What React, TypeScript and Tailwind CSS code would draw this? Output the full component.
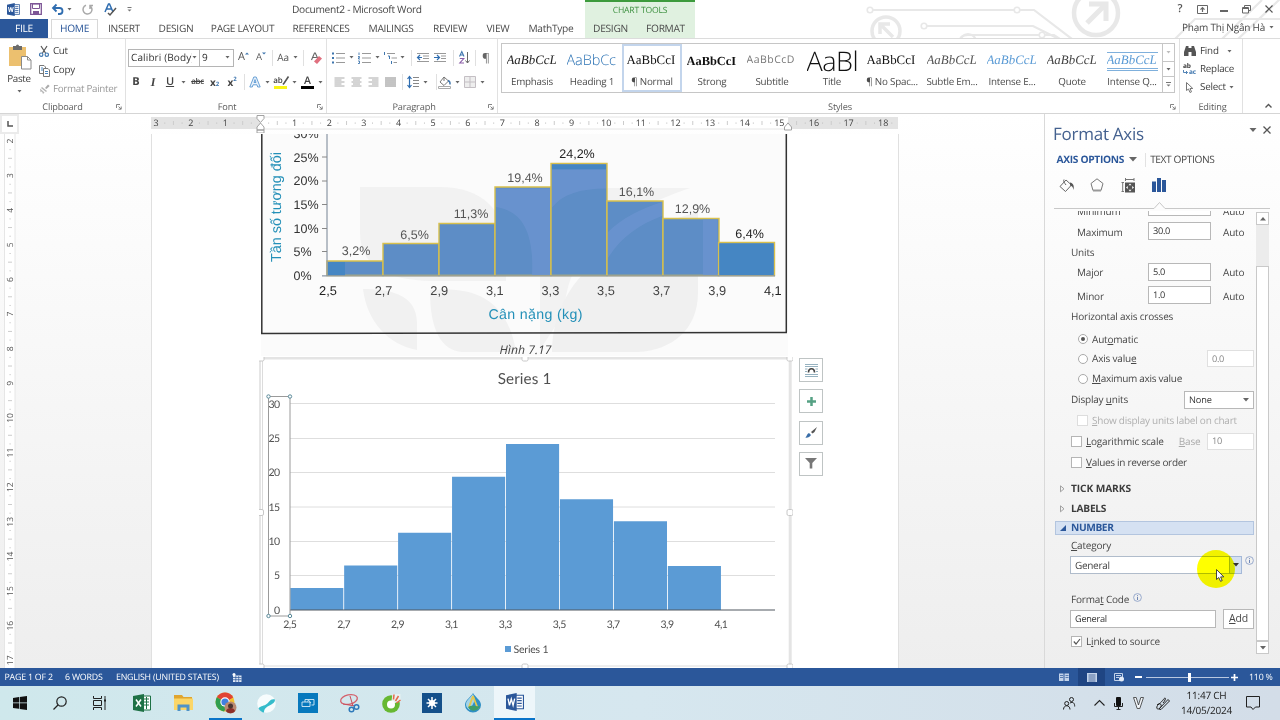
import type { ReactNode } from 'react';
import clsx from 'clsx';

type BoxProps = { className?: string; children?: ReactNode };

const Slot = ({ className, children }: BoxProps) => (
  <div className={clsx('flex shrink-0 items-center justify-center', className)}>{children}</div>
);

const Icon = ({ w, h, children }: { w: number; h: number; children: ReactNode }) => (
  <svg width={w} height={h} viewBox={`0 0 ${w} ${h}`} fill="none" className="shrink-0 overflow-visible">
    {children}
  </svg>
);

const Caret = ({ color = '#666' }: { color?: string }) => (
  <Icon w={5} h={3}>
    <path d="M0.5 0h4L2.5 2.4z" fill={color} />
  </Icon>
);

const Sep = () => <div className="h-4 w-px bg-[#e0e0e0]" />;

const Launcher = () => (
  <Icon w={6} h={6}>
    <path d="M0.5 4V0.5H4M2.5 2.5L5 5M5.2 2.5v2.7H2.5" stroke="#777" strokeWidth="0.9" />
  </Icon>
);

/* ---------- Title bar ---------- */

const WordLogo = ({ size = 13 }: { size?: number }) => (
  <svg width={size} height={size} viewBox="0 0 16 16" className="shrink-0">
    <path d="M8 2h7.5v12H8z" fill="#fff" stroke="#2b579a" strokeWidth="1" />
    <path d="M10 4.5h4M10 6.8h4M10 9.2h4M10 11.5h4" stroke="#2b579a" />
    <path d="M0 2l9.5-2v16L0 14z" fill="#2b579a" />
    <path d="M1.8 5l1.3 6 1.6-5.6L6.300 11l1.400-6" stroke="#fff" strokeWidth="1.2" fill="none" />
  </svg>
);

const Circuit = () => (
  <svg className="absolute right-0 top-0" width="420" height="39" viewBox="860 0 420 39" fill="none" stroke="#e8e8e8" strokeWidth="2.2">
    <circle cx="870" cy="10" r="2.8" strokeWidth="1.6" />
    <path d="M873 10h141M1020 10h14l38 29" />
    <circle cx="1017" cy="10" r="2.8" strokeWidth="1.6" />
    <circle cx="886" cy="31" r="14" strokeWidth="3.500" />
    <path d="M893 37l-11-11M880 34V24h10" strokeWidth="3.500" />
    <circle cx="924" cy="26" r="2.8" strokeWidth="1.6" />
    <path d="M927 26h106l26 13" />
    <path d="M960 39q2-4 8-4h72M1044 35h10l6 4" />
    <circle cx="968" cy="42" r="8" />
    <circle cx="1042" cy="35" r="2.800" strokeWidth="1.6" />
    <circle cx="1096" cy="13" r="22" strokeWidth="4.500" />
    <path d="M1087 23l19-19M1089 4h17v17" strokeWidth="5" />
    <path d="M1175 39l20-20h85M1222 39l40-39M1238 39l42-40" />
  </svg>
);

const Tab = ({ className, children }: BoxProps) => (
  <div className={clsx('flex h-[19px] items-center justify-center whitespace-nowrap text-[10.2px] tracking-[-0.3px] text-[#4a4a4a]', className)}>
    {children}
  </div>
);

const TitleBar = () => (
  <header className="relative flex h-[39px] shrink-0 overflow-hidden border-b border-[#dcdcdc] bg-white">
    <Circuit />
    <div className="flex w-[585px] shrink-0 flex-col">
      <div className="flex h-[19px] items-center">
        <Slot className="w-[26px]"><WordLogo /></Slot>
        <Slot className="w-[19px]">
          <Icon w={12} h={12}>
            <path d="M0.700 0.700h10.600v10.600H0.700z" stroke="#7d5596" strokeWidth="1.300" />
            <path d="M2.500 1h7v4.500h-7z" stroke="#7d5596" />
            <path d="M3 8h6v3.300H3z" fill="#7d5596" />
          </Icon>
        </Slot>
        <Slot className="w-[26px]">
          <Icon w={12} h={11}>
            <path d="M4.500 0.500L1 4l3.500 3.500M1 4h6.500a3 3 0 010 6H6" stroke="#2f6db0" strokeWidth="1.800" />
          </Icon>
        </Slot>
        <Slot className="-ml-1 w-[4px]"><Caret /></Slot>
        <Slot className="ml-[7px] w-[18px]">
          <Icon w={11} h={11}>
            <path d="M4 1.300A4.500 4.500 0 108 1.800M8 5V1.500h3" stroke="#a9a9a9" strokeWidth="1.500" />
          </Icon>
        </Slot>
        <Slot className="ml-[4px] w-[20px]">
          <Icon w={13} h={13}>
            <path d="M1 9L4.500 1h1L9 9M2.500 6h5" stroke="#2f6db0" strokeWidth="1.500" />
            <path d="M4 10l2 2 6-7" stroke="#555" strokeWidth="1.500" />
          </Icon>
        </Slot>
        <Slot className="ml-[6px] w-[6px]">
          <Icon w={5} h={5}>
            <path d="M0.500 0.500h4" stroke="#777" />
            <path d="M0.500 2.500h4l-2 2z" fill="#777" />
          </Icon>
        </Slot>
        <div className="ml-[160px] whitespace-nowrap pt-[2px] text-[10.2px] tracking-[-0.3px] text-[#484848]">Document2 - Microsoft Word</div>
      </div>
      <nav className="flex items-end pt-px">
        <Tab className="w-[48px] bg-[#2b579a] !text-white">FILE</Tab>
        <Tab className="ml-[3px] w-[47px] border border-b-0 border-[#d8d8d8] bg-white !text-[#2b579a]">HOME</Tab>
        <Tab className="w-[52px]">INSERT</Tab>
        <Tab className="w-[52px]">DESIGN</Tab>
        <Tab className="w-[81px]">PAGE LAYOUT</Tab>
        <Tab className="w-[76px]">REFERENCES</Tab>
        <Tab className="w-[64px]">MAILINGS</Tab>
        <Tab className="w-[54px]">REVIEW</Tab>
        <Tab className="w-[42px]">VIEW</Tab>
        <Tab className="w-[64px]">MathType</Tab>
      </nav>
    </div>
    <div className="flex w-[110px] shrink-0 flex-col border-t-2 border-[#3d9b3d] bg-[#e0f1e0]">
      <div className="flex h-[18px] items-center justify-center text-[8.600px] tracking-[-0.2px] text-[#3d9140]">CHART TOOLS</div>
      <div className="flex">
        <Tab className="w-[51px]">DESIGN</Tab>
        <Tab className="w-[59px]">FORMAT</Tab>
      </div>
    </div>
    <div className="relative ml-auto flex flex-col items-end">
      <div className="flex h-[18px] items-center text-[#555]">
        <Slot className="w-[20px] text-[11px] font-semibold">?</Slot>
        <Slot className="w-[24px]">
          <Icon w={11} h={9}>
            <path d="M0.500 0.500h10v8h-10z" stroke="#666" />
            <path d="M5.500 7V3M3.500 4.700l2-2 2 2" stroke="#666" strokeWidth="1.200" />
          </Icon>
        </Slot>
        <Slot className="w-[20px] pt-[4px]"><div className="h-[1.5px] w-[8px] bg-[#666]" /></Slot>
        <Slot className="w-[24px]">
          <Icon w={9} h={9}>
            <path d="M2.500 2.500V0.500h6v5h-2M0.500 2.500h6v5.500h-6zM0.500 3.500h6" stroke="#666" />
          </Icon>
        </Slot>
        <Slot className="w-[22px]">
          <Icon w={8} h={8}>
            <path d="M0.500 0.500l7 7M7.500 0.500l-7 7" stroke="#555" strokeWidth="1.200" />
          </Icon>
        </Slot>
      </div>
      <div className="flex h-[19px] items-center gap-[4px] pr-[6px] text-[10px] tracking-[-0.22px] text-[#484848]">
        Phạm Thị Ngân Hà <Caret />
      </div>
    </div>
  </header>
);

/* ---------- Ribbon ---------- */

const GroupLabel = ({ children, launcher = true }: { children: ReactNode; launcher?: boolean }) => (
  <div className="flex h-[13px] items-center text-[9.2px] leading-[13px] tracking-[-0.15px] text-[#5c5c5c]">
    <div className="flex-1 text-center">{children}</div>
    {launcher && <div className="-ml-[9px] w-[9px]"><Launcher /></div>}
  </div>
);

const Clipboard = () => (
  <section className="flex w-[126px] shrink-0 flex-col border-r border-[#e1e1e1]">
    <div className="flex h-[61px]">
      <div className="flex w-[38px] flex-col items-center pt-[5px]">
        <Icon w={24} h={26}>
          <path d="M2 3h17v19H2z" fill="#ecc06f" />
          <path d="M6 2h9v4H6z" fill="#6b6b6b" />
          <circle cx="10.500" cy="2" r="1.500" fill="#6b6b6b" />
          <path d="M14.500 12.500h6l3.500 3.500v9h-9.500z" fill="#fff" stroke="#8a8a8a" />
          <path d="M20.500 12.500V16H24" stroke="#8a8a8a" />
        </Icon>
        <span className="mt-[2px] text-[9.800px] leading-[13px] tracking-[-0.3px] text-[#3c3c3c]">Paste</span>
        <span className="mt-[5px]"><Caret /></span>
      </div>
      <div className="flex flex-col pt-[4px] text-[9.800px] tracking-[-0.3px] text-[#3c3c3c]">
        <div className="flex h-[17px] items-center gap-[3px]">
          <Slot className="w-[12px]">
            <Icon w={10} h={11}>
              <path d="M2 0l4.500 7M8 0L3.500 7" stroke="#555" strokeWidth="1.200" />
              <circle cx="2.200" cy="8.700" r="1.700" stroke="#3f76ae" strokeWidth="1.200" />
              <circle cx="7.800" cy="8.700" r="1.700" stroke="#3f76ae" strokeWidth="1.200" />
            </Icon>
          </Slot>
          Cut
        </div>
        <div className="flex h-[21px] items-center gap-[3px]">
          <Slot className="w-[12px]">
            <Icon w={11} h={12}>
              <path d="M0.500 0.500H5l1.500 1.500v6.500h-6z" fill="#fff" stroke="#777" />
              <path d="M4.500 3.500H9l1.500 1.500v6.500h-6z" fill="#fff" stroke="#777" />
              <path d="M6 6.500h3M6 8.500h3M2 3h2M2 5h2" stroke="#4a86c0" />
            </Icon>
          </Slot>
          Copy
        </div>
        <div className="flex h-[16px] items-center gap-[3px] text-[#999]">
          <Slot className="w-[12px]">
            <Icon w={11} h={10}>
              <path d="M6 4l3-3.500 1.700 1.500L7.500 5z" fill="#aaa" />
              <path d="M3 3l5 4-1 1-5-4zM1 4.500l4.500 4L4 10 3 7.500 1.500 8z" fill="#b5b5b5" />
            </Icon>
          </Slot>
          Format Painter
        </div>
      </div>
    </div>
    <GroupLabel>Clipboard</GroupLabel>
  </section>
);

const FontGroup = () => (
  <section className="flex w-[201px] shrink-0 flex-col border-r border-[#e1e1e1] pl-[2px]">
    <div className="mt-[9px] flex h-[19px] items-center text-[#555]">
      <div className="flex h-[18px] w-[72px] shrink-0 items-center justify-between border border-[#b5b5b5] pl-[2px] pr-[2px] text-[10px] tracking-[0.12px] text-[#333]">
        <span className="w-[61px] overflow-hidden whitespace-nowrap">Calibri (Body)</span> <Caret />
      </div>
      <div className="-ml-px flex h-[18px] w-[35px] shrink-0 items-center justify-between border border-[#b5b5b5] pl-[2px] pr-[3px] text-[10px] text-[#333]">
        9 <Caret />
      </div>
      <Slot className="w-[19px] text-[11px]">
        A<span className="-mt-[8px]"><Icon w={4} h={3}><path d="M0 2.500l2-2 2 2z" fill="#3f76ae" /></Icon></span>
      </Slot>
      <Slot className="w-[16px] text-[9.500px]">
        A<span className="-mt-[8px]"><Icon w={4} h={3}><path d="M0 0.500l2 2 2-2z" fill="#3f76ae" /></Icon></span>
      </Slot>
      <Slot className="w-[6px]"><Sep /></Slot>
      <Slot className="w-[16px] text-[10px] tracking-[-0.3px]">Aa</Slot>
      <Slot className="w-[9px]"><Caret /></Slot>
      <Slot className="w-[7px]"><Sep /></Slot>
      <Slot className="w-[18px]">
        <Icon w={11} h={12}>
          <path d="M0.500 8L3.500 1h0.800L7 7M1.600 5.500h4" stroke="#666" strokeWidth="1.100" />
          <path d="M3 9.500L8 4l3 2.500L6 12z" fill="#e0707f" />
        </Icon>
      </Slot>
    </div>
    <div className="mt-[5px] flex h-[20px] items-center text-[11px] text-[#444]">
      <Slot className="w-[16px] font-bold">B</Slot>
      <Slot className="w-[18px] font-['Liberation_Serif',serif] text-[12px] font-bold italic">I</Slot>
      <Slot className="w-[16px] font-semibold underline">U</Slot>
      <Slot className="w-[11px]"><Caret /></Slot>
      <Slot className="w-[17px] text-[8px] font-semibold tracking-[-0.3px] line-through">abc</Slot>
      <Slot className="w-[17px] text-[10px] font-bold">x<sub className="text-[6px] text-[#3f76ae]">2</sub></Slot>
      <Slot className="w-[18px] text-[10px] font-bold">x<sup className="text-[6px] text-[#3f76ae]">2</sup></Slot>
      <Slot className="w-[6px]"><Sep /></Slot>
      <Slot className="w-[16px]">
        <Icon w={12} h={12}>
          <path d="M0.800 11L4.800 1h2.400l4 10H8.700L8 8.800H4L3.300 11zM5 6.500h2L6 3.600z" fill="#e9f2fb" stroke="#5b98d2" strokeWidth="0.900" />
        </Icon>
      </Slot>
      <Slot className="w-[8px]"><Caret /></Slot>
      <Slot className="w-[19px] flex-col">
        <span className="flex items-center text-[8px] font-semibold leading-[10px]">
          ab
          <Icon w={5} h={9}><path d="M5.500 0.500L1.500 6.500l-1.500 2" stroke="#555" strokeWidth="1.600" /></Icon>
        </span>
        <span className="h-[3px] w-[13px] bg-[#f9f517]" />
      </Slot>
      <Slot className="w-[8px]"><Caret /></Slot>
      <Slot className="w-[19px] flex-col">
        <span className="text-[10.500px] font-semibold leading-[10px]">A</span>
        <span className="h-[3px] w-[13px] bg-black" />
      </Slot>
      <Slot className="w-[7px]"><Caret /></Slot>
    </div>
    <div className="mt-auto"><GroupLabel>Font</GroupLabel></div>
  </section>
);

const ListIcon = ({ numbered }: { numbered?: boolean }) => (
  <Icon w={13} h={12}>
    {numbered ? (
      <path d="M1 0.500v2.500M0 4.500h1.500v1.200H0.500v1.300H2M0 9h1.500v2.500H0" stroke="#3f76ae" strokeWidth="0.900" />
    ) : (
      <path d="M0 0.500h2v2H0zM0 5h2v2H0zM0 9.500h2v2H0z" fill="#3f76ae" />
    )}
    <path d="M4 1.500h9M4 6h9M4 10.500h9" stroke="#999" strokeWidth="1.100" />
  </Icon>
);

const AlignIcon = ({ d, color = '#aaa' }: { d: string; color?: string }) => (
  <Icon w={11} h={10}>
    <path d={d} stroke={color} strokeWidth="1" />
  </Icon>
);

const Paragraph = () => (
  <section className="flex w-[171px] shrink-0 flex-col border-r border-[#e1e1e1] pl-[4px]">
    <div className="mt-[9px] flex h-[19px] items-center">
      <Slot className="w-[15px]"><ListIcon /></Slot>
      <Slot className="w-[10px]"><Caret /></Slot>
      <Slot className="w-[16px]"><ListIcon numbered /></Slot>
      <Slot className="w-[10px]"><Caret /></Slot>
      <Slot className="w-[16px]">
        <Icon w={13} h={12}>
          <path d="M0.500 0v3M4 4h1.500v3M7.500 9v3" stroke="#3f76ae" />
          <path d="M3 1.500h8M7.500 6H13M9.500 10.500H13" stroke="#999" />
        </Icon>
      </Slot>
      <Slot className="w-[9px]"><Caret /></Slot>
      <Slot className="w-[8px]"><Sep /></Slot>
      <Slot className="w-[15px]">
        <Icon w={12} h={9}>
          <path d="M0 0.500h12M6 3h6M6 5.500h6M0 8.500h12" stroke="#999" />
          <path d="M5 4.500H1M3 2L0.500 4.500 3 7" stroke="#2f6db0" strokeWidth="1.200" />
        </Icon>
      </Slot>
      <Slot className="w-[19px]">
        <Icon w={12} h={9}>
          <path d="M0 0.500h12M7 3h5M7 5.500h5M0 8.500h12" stroke="#999" />
          <path d="M0 4.500h5M3 2l2.500 2.500L3 7" stroke="#2f6db0" strokeWidth="1.200" />
        </Icon>
      </Slot>
      <Slot className="w-[8px]"><Sep /></Slot>
      <Slot className="w-[15px]">
        <Icon w={11} h={13}>
          <path d="M0.500 5.500L2.800 0.500 5 5.500M1.200 4h3" stroke="#3f76ae" strokeWidth="1.100" />
          <path d="M0.800 7.500h4L0.800 12h4.200" stroke="#8b5ea8" strokeWidth="1.100" />
          <path d="M8.500 1v11M6.500 9.500l2 2.500 2-2.500" stroke="#666" />
        </Icon>
      </Slot>
      <Slot className="w-[6px]"><Sep /></Slot>
      <Slot className="w-[16px] text-[12px] text-[#666]">¶</Slot>
    </div>
    <div className="mt-[5px] flex h-[20px] items-center">
      <Slot className="w-[16px]"><AlignIcon d="M0.500 1h10M0.500 3h7M0.500 5h10M0.500 7h7M0.500 9h10" /></Slot>
      <Slot className="w-[18px]"><AlignIcon d="M0.500 1h10M2 3h7M0.500 5h10M2 7h7M0.500 9h10" /></Slot>
      <Slot className="w-[17px]"><AlignIcon d="M0.500 1h10M4 3h6.500M0.500 5h10M4 7h6.500M0.500 9h10" /></Slot>
      <Slot className="w-[17px]"><AlignIcon color="#888" d="M0 1h11M0 3h11M0 5h11M0 7h11M0 9h11" /></Slot>
      <Slot className="w-[6px]"><Sep /></Slot>
      <Slot className="w-[16px]">
        <Icon w={12} h={12}>
          <path d="M2.500 1v10M0.500 3l2-2.500 2 2.500M0.500 9l2 2.500 2-2.500" stroke="#2f6db0" strokeWidth="1.200" />
          <path d="M6 1.500h6M6 4.500h6M6 7.500h6M6 10.500h6" stroke="#888" />
        </Icon>
      </Slot>
      <Slot className="w-[9px]"><Caret /></Slot>
      <Slot className="w-[7px] !justify-end"><Sep /></Slot>
      <Slot className="w-[15px]">
        <Icon w={13} h={13}>
          <path d="M6 1L2 6l4 3.500L10.500 5zM6 1v4" stroke="#777" />
          <path d="M10 4.500q2.500 1 2 4" stroke="#3f76ae" strokeWidth="1.400" />
          <path d="M0.500 10.500h12v2H0.500z" fill="#fff" stroke="#aaa" />
        </Icon>
      </Slot>
      <Slot className="w-[10px]"><Caret /></Slot>
      <Slot className="w-[16px]">
        <Icon w={12} h={12}>
          <path d="M0.500 0.500h11v11H0.500zM6 0.500v11M0.500 6h11" fill="#eee" stroke="#c4bfc4" />
        </Icon>
      </Slot>
      <Slot className="w-[9px]"><Caret /></Slot>
    </div>
    <div className="mt-auto"><GroupLabel>Paragraph</GroupLabel></div>
  </section>
);

const STYLES = [
  { name: 'Emphasis', sample: 'AaBbCcL', cls: "font-['Liberation_Serif',serif] italic text-[12.900px] text-[#222]" },
  { name: 'Heading 1', sample: 'AaBbCc', cls: 'text-[14.500px] font-light tracking-[-0.1px] text-[#2e74b5]' },
  { name: '¶ Normal', sample: 'AaBbCcI', cls: "font-['Liberation_Serif',serif] text-[12.900px] text-[#111]", selected: true },
  { name: 'Strong', sample: 'AaBbCcI', cls: "font-['Liberation_Serif',serif] text-[12.400px] font-bold text-[#111]" },
  { name: 'Subtitle', sample: 'AaBbCcD', cls: 'text-[10.500px] tracking-[0.5px] text-[#777]' },
  { name: 'Title', sample: 'AaBl', cls: 'text-[27px] font-light leading-[22px] tracking-[-0.5px] text-[#111]' },
  { name: '¶ No Spac...', sample: 'AaBbCcI', cls: "font-['Liberation_Serif',serif] text-[12.900px] text-[#111]" },
  { name: 'Subtle Em...', sample: 'AaBbCcL', cls: "font-['Liberation_Serif',serif] italic text-[12.900px] text-[#555]" },
  { name: 'Intense E...', sample: 'AaBbCcL', cls: "font-['Liberation_Serif',serif] italic text-[12.900px] text-[#5b9bd5]" },
  { name: 'Quote', sample: 'AaBbCcL', cls: "font-['Liberation_Serif',serif] italic text-[12.900px] text-[#444]" },
  {
    name: 'Intense Q...',
    sample: 'AaBbCcL',
    cls: "font-['Liberation_Serif',serif] italic text-[12.900px] leading-[15px] text-[#5b9bd5] border-t border-b-[3px] border-double border-[#7fb0dc]",
  },
];

const StylesGroup = () => (
  <section className="flex w-[682px] shrink-0 flex-col border-r border-[#e1e1e1] pl-[3px]">
    <div className="mt-[4px] flex h-[50px] w-[674px] border border-[#c6c6c6]">
      <div className="flex flex-1 overflow-hidden">
        {STYLES.map((s) => (
          <div
            key={s.name}
            className={clsx('flex h-[48px] w-[60px] shrink-0 flex-col items-center border-2', s.selected ? 'border-[#c3d5ec]' : 'border-transparent')}
          >
            <div className="mt-[4px] flex h-[22px] w-[51px] items-center overflow-hidden whitespace-nowrap">
              <span className={clsx('w-full', s.cls)}>{s.sample}</span>
            </div>
            <div className="mt-[3px] flex h-[14px] items-center whitespace-nowrap text-[9.800px] tracking-[-0.2px] text-[#4c4c4c]">{s.name}</div>
          </div>
        ))}
      </div>
      <div className="flex w-[12px] flex-col border-l border-[#c6c6c6]">
        <Slot className="h-[17px]"><Caret color="#bbb" /></Slot>
        <Slot className="h-[16px] border-y border-[#c6c6c6]"><Caret /></Slot>
        <Slot className="h-[15px]">
          <Icon w={5} h={5}>
            <path d="M0 0.500h5" stroke="#777" />
            <path d="M0.500 2.500h4l-2 2z" fill="#777" />
          </Icon>
        </Slot>
      </div>
    </div>
    <div className="mt-auto"><GroupLabel>Styles</GroupLabel></div>
  </section>
);

const Editing = () => (
  <section className="flex w-[63px] shrink-0 flex-col border-r border-[#e1e1e1] pl-[3px] text-[9.800px] tracking-[-0.22px] text-[#3c3c3c]">
    <div className="mt-[3px] flex h-[18px] items-center gap-[3px]">
      <Slot className="w-[14px]">
        <Icon w={12} h={10}>
          <path d="M2 0h2.500v2H7.500V0H10l2 6v4H7.500V6h-3v4H0V6z" fill="#555" />
        </Icon>
      </Slot>
      Find <span className="ml-[5px]"><Caret /></span>
    </div>
    <div className="flex h-[18px] items-center gap-[3px]">
      <div className="flex w-[14px] flex-col text-[6.500px] font-bold leading-[6px] tracking-[-0.3px]">
        <span>ab</span>
        <span className="flex items-center gap-px text-[#3f76ae]">
          <Icon w={5} h={5}><path d="M0.500 0v2.500h4M3 1l1.500 1.500L3 4" stroke="#3f76ae" strokeWidth="0.900" /></Icon>
          ac
        </span>
      </div>
      Replace
    </div>
    <div className="flex h-[18px] items-center gap-[3px]">
      <Slot className="w-[14px]">
        <Icon w={8} h={11}>
          <path d="M0.500 0.500v8l2-1.500L4 10.500l1.500-0.700L4 6.500h2.800z" fill="#fff" stroke="#777" />
        </Icon>
      </Slot>
      Select <Caret />
    </div>
    <div className="mt-auto"><GroupLabel launcher={false}>Editing</GroupLabel></div>
  </section>
);

const Ribbon = () => (
  <div className="flex h-[75px] shrink-0 border-b border-[#d5d5d5] bg-white">
    <Clipboard />
    <FontGroup />
    <Paragraph />
    <StylesGroup />
    <Editing />
    <div className="ml-auto flex items-end pb-[5px] pr-[8px]">
      <Icon w={7} h={5}>
        <path d="M0.500 4.500l3-3 3 3" stroke="#555" strokeWidth="1.400" />
      </Icon>
    </div>
  </div>
);

/* ---------- Rulers ---------- */

const CM = 34.62;

const HorizontalRuler = () => (
  <svg width="747" height="19" viewBox="151 114 747 19" className="block">
    <path d="M151 117h747v12H151z" fill="#e3e3e3" />
    <path d="M260 117h528v12H260z" fill="#fff" />
    <path d="M260 117h528M260 129h528" stroke="#e6e6e6" />
    {Array.from({ length: 22 }, (_, i) => i - 3).map((n) => {
      const x = 260 + n * CM;
      return (
        <g key={n}>
          {n !== 0 && (
            <text x={x} y="126" textAnchor="middle" fontSize="9" fill="#444">{Math.abs(n)}</text>
          )}
          {n < 18 && <path d={`M${x + CM / 2} 121v4`} stroke="#ccc" />}
          <path d={`M${x + CM / 4} 122.500v1.200${n < 18 ? `M${x + (CM * 3) / 4} 122.500v1.200` : ''}`} stroke="#c4c4c4" />
        </g>
      );
    })}
    <path d="M257 115.500h7v3l-3.500 4-3.500-4zM257 130v-3l3.500-4 3.500 4v3zM257 130h7v3h-7z" fill="#fff" stroke="#999" strokeWidth="0.900" />
    <path d="M784.500 130v-3l3.500-4 3.500 4v3z" fill="#fff" stroke="#999" strokeWidth="0.900" />
  </svg>
);

const VerticalRuler = () => (
  <svg width="19" height="534" viewBox="0 134 19 534" className="block">
    <path d="M5 134h10v534H5z" fill="#fff" />
    <path d="M4.500 134v534M15 134v534" stroke="#e6e6e6" />
    {Array.from({ length: 16 }, (_, i) => i + 2).map((n) => {
      const y = 141 + (n - 2) * CM;
      return (
        <g key={n}>
          <text transform={`translate(13 ${y}) rotate(-90)`} textAnchor="middle" fontSize="8.500" fill="#555">{n}</text>
          <path d={`M8 ${y + CM / 2}h4`} stroke="#ccc" />
          <path d={`M9.500 ${y + CM / 4}h1.200M9.500 ${y + (CM * 3) / 4}h1.200`} stroke="#c4c4c4" />
        </g>
      );
    })}
  </svg>
);

/* ---------- Document ---------- */

const TOP_BARS = [
  { x: 327, y: 261, label: '3,2%', lx: 356, ly: 254.500 },
  { x: 383, y: 243.500, label: '6,5%', lx: 414.500, ly: 238.500 },
  { x: 439, y: 223.500, label: '11,3%', lx: 471, ly: 218 },
  { x: 495, y: 187, label: '19,4%', lx: 525, ly: 182 },
  { x: 551, y: 163.500, label: '24,2%', lx: 577, ly: 157.500 },
  { x: 607, y: 201, label: '16,1%', lx: 636.500, ly: 196 },
  { x: 663, y: 218.500, label: '12,9%', lx: 692.500, ly: 213 },
  { x: 718.500, y: 242.500, label: '6,4%', lx: 749.500, ly: 238 },
];

const X_LABELS = ['2,5', '2,7', '2,9', '3,1', '3,3', '3,5', '3,7', '3,9', '4,1'];

const TextbookFigure = () => (
  <svg width="532" height="223" viewBox="259 134 532 223" className="block font-['Liberation_Sans',sans-serif]">
    <path d="M261 134h527v222H261z" fill="#fbfbfb" />
    <path d="M360 187h80c40 0 66 22 66 62v32h-70c-44 0-76-12-76-48z" fill="#f2f2f2" />
    <path d="M363 289c24 0 54 4 54 34v27c-28-5-50-28-54-61zM430 290c30-2 76-2 86 62h-54c-20-2-32-20-32-62z" fill="#f1f1f1" />
    <path d="M540 330v-74c0-44 28-68 70-68h80c-50 18-112 44-124 108-3 24-14 34-26 54z" fill="#f2f2f2" />
    <path d="M552 352c0-70 60-118 146-140v80c0 38-26 58-60 60z" fill="#f0f0f0" />
    <path d="M261.800 134v199.500M786.300 134v198.500M261 333.500l526-1" stroke="#333" strokeWidth="1.500" fill="none" />
    {TOP_BARS.map((b) => (
      <path key={b.x} d={`M${b.x} ${b.y}h56V275.500h-56z`} fill="#5d8dc6" stroke="#d8c04c" strokeWidth="1.400" />
    ))}
    <path d="M328 262h17v13.500h-17zM719.500 243.500h54V275h-54zM552 164.500h54v5h-54z" fill="#4586c3" />
    <path d="M496 188.500h54V275h-18c2-40-8-64-36-68zM552 169.500h54v19c-26 0-44 6-54 19zM608 258v-26c14-14 32-23 54-30v14c-22 8-42 22-54 42zM703 219.500h14.500V275H703z" fill="#6b94d0" opacity="0.8" />
    <path d="M327 134v142M322 275.800h453" stroke="#8b97a5" strokeWidth="1.200" />
    <path d="M322 251.500h5M322 228.500h5M322 204.500h5M322 181h5M322 157h5" stroke="#888" />
    <g fontSize="12" fill="#444">
      {TOP_BARS.map((b) => (
        <text key={b.label} x={b.lx} y={b.ly} textAnchor="middle" fontSize="12.500" fill={b.label === '24,2%' || b.label === '6,4%' ? '#222' : '#555'}>{b.label}</text>
      ))}
      {['0%', '5%', '10%', '15%', '20%', '25%', '30%'].map((t, i) => (
        <text key={t} x="293.500" y={280 - i * 23.700} fontSize="12.500" fill="#333">{t}</text>
      ))}
      {X_LABELS.map((t, i) => (
        <text key={t} x={328 + i * 55.600} y="295" textAnchor="middle" fontSize="12.800" fill={i === 0 || i === 8 ? '#222' : '#444'}>{t}</text>
      ))}
      <text x="535.500" y="318.500" textAnchor="middle" fontSize="14.200" fill="#2490b8" textLength="94">Cân nặng (kg)</text>
      <text transform="translate(281 207) rotate(-90)" textAnchor="middle" fontSize="14.500" fill="#2490b8" textLength="110">Tần số tương đối</text>
      <text x="525.500" y="353.500" textAnchor="middle" fontSize="12" fontStyle="italic" className="font-['Open_Sans',sans-serif]" textLength="52" lengthAdjust="spacingAndGlyphs">Hình 7.17</text>
    </g>
  </svg>
);

const BARS = [588, 565.500, 532.700, 476.800, 444, 499.300, 521.300, 566];

const SeriesChart = () => (
  <svg width="534" height="311" viewBox="259 357 534 311" className="block font-['Lato',sans-serif]">
    <path d="M261 358h530v309H261z" fill="#fff" />
    <path d="M261 358h529" stroke="#e4e4e4" strokeWidth="3" />
    <path d="M790.200 359v308" stroke="#e4e4e4" strokeWidth="3" />
    <path d="M260 358v309" stroke="#ccc" />
    <path d="M262.500 360v306h526" stroke="#dcdcdc" fill="none" />
    {[403.500, 438.500, 472.500, 507, 541.500, 575.500].map((y) => (
      <path key={y} d={`M290 ${y}h485`} stroke="#dedede" />
    ))}
    {BARS.map((y, i) => (
      <path key={i} d={`M${290.200 + i * 53.950} ${y}h53.100V610h-53.100z`} fill="#5b9bd5" />
    ))}
    <path d="M290 610h485" stroke="#505860" strokeWidth="1.200" />
    <path d="M268.500 396.500h21.500v219.500h-21.500z" stroke="#9a9a9a" fill="none" />
    {[[268.500, 396.500], [290, 396.500], [268.500, 616], [290, 616]].map(([x, y]) => (
      <circle key={`${x}-${y}`} cx={x} cy={y} r="1.700" fill="#fff" stroke="#5a8a9a" />
    ))}
    <g fontSize="10.500" fill="#505050">
      {[30, 25, 20, 15, 10, 5, 0].map((n, i) => (
        <text key={n} x="280" y={407.500 + i * 34.350} textAnchor="end" textLength={n > 9 ? 11.500 : 5.500}>{n}</text>
      ))}
      {X_LABELS.map((t, i) => (
        <text key={t} x={290 + i * 53.900} y="628" textAnchor="middle" textLength="13.500">{t}</text>
      ))}
      <text x="524.500" y="384" textAnchor="middle" fontSize="15.200" textLength="53.500">Series 1</text>
      <path d="M505 646h6v6h-6z" fill="#5b9bd5" />
      <text x="513.500" y="653" fontSize="10.500" textLength="35">Series 1</text>
    </g>
    {[[261, 358], [525, 358], [790, 358], [260.500, 512.500], [790, 512.500], [261, 667], [525, 667], [790, 667]].map(([x, y]) => (
      <rect key={`${x}-${y}`} x={x - 3} y={y - 3} width="6" height="6" rx="1.500" fill="#fff" stroke="#c8c8c8" />
    ))}
  </svg>
);

const ChartButton = ({ children }: BoxProps) => (
  <button className="flex h-6 w-6 items-center justify-center border border-[#bfc4c4] bg-white">{children}</button>
);

const ChartButtons = () => (
  <div className="flex flex-col gap-[7.3px] pl-[6px] pt-[224px]">
    <ChartButton>
      <Icon w={13} h={13}>
        <path d="M0 0.500h13M0 2.500h13M0 10.500h13M0 12.500h13M0 5h2.500M10.500 5H13M0 7.500h2M11 7.500h2" stroke="#8aa9b9" strokeWidth="0.900" />
        <path d="M3.500 8.500c0-5 6-5 6 0" stroke="#444" strokeWidth="1.700" />
      </Icon>
    </ChartButton>
    <ChartButton>
      <Icon w={9} h={9}>
        <path d="M4.500 0v9M0 4.500h9" stroke="#56a184" strokeWidth="2.500" />
      </Icon>
    </ChartButton>
    <ChartButton>
      <Icon w={12} h={11}>
        <path d="M12 0L9.500 5 7.500 6.500 6 5z" fill="#555" />
        <path d="M0 10.500c2-0.500 1.500-3.500 4-4.500l2 2c-1 2-3.500 3-6 2.500z" fill="#3a6ea8" />
      </Icon>
    </ChartButton>
    <ChartButton>
      <Icon w={12} h={11}>
        <path d="M0 0h12L7.300 5v5.500H4.700V5z" fill="#777" />
      </Icon>
    </ChartButton>
  </div>
);

const DocumentArea = () => (
  <main className="flex flex-1 bg-linear-to-b from-white to-[#eeeeee]">
    <div className="w-[19px] shrink-0">
      <div className="flex h-[20px] w-[19px] items-center justify-center border-2 border-[#ebebeb] bg-white">
        <Icon w={6} h={6}>
          <path d="M1 0v5h5" stroke="#555" strokeWidth="1.500" />
        </Icon>
      </div>
      <VerticalRuler />
    </div>
    <div className="ml-[132px] flex w-[748px] flex-col">
      <HorizontalRuler />
      <div className="mt-px flex flex-1 border-x border-[#e0e0e0] bg-white pl-[107px]">
        <div className="flex w-[534px] shrink-0 flex-col">
          <TextbookFigure />
          <SeriesChart />
        </div>
        <ChartButtons />
      </div>
    </div>
  </main>
);

/* ---------- Format Axis pane ---------- */

const Field = ({ className, children }: BoxProps) => (
  <div className={clsx('flex items-center border bg-white pl-[4px] text-[9.200px] tracking-[-0.3px]', className)}>{children}</div>
);

const ValueRow = ({ label, value, className }: { label: string; value: string; className: string }) => (
  <div className={clsx('flex shrink-0 items-center pl-[21px]', className)}>
    <span className="w-[71px] pt-px">{label}</span>
    <Field className="mb-px h-[18px] w-[63px] border-[#b8b8b8] text-[#333]">{value}</Field>
    <span className="ml-[12px] pt-px">Auto</span>
  </div>
);

const Radio = ({ checked }: { checked?: boolean }) => (
  <span className="mr-[4px] flex h-[10px] w-[10px] items-center justify-center rounded-full border border-[#aaa] bg-white">
    {checked && <span className="h-[4px] w-[4px] rounded-full bg-[#555]" />}
  </span>
);

const Check = ({ checked, faded }: { checked?: boolean; faded?: boolean }) => (
  <span className={clsx('mr-[4px] flex h-[11px] w-[11px] shrink-0 items-center justify-center border bg-white', faded ? 'border-[#ddd]' : 'border-[#b5b5b5]')}>
    {checked && (
      <Icon w={8} h={7}>
        <path d="M0.800 3.500L3 6l4-5" stroke="#555" strokeWidth="1.200" />
      </Icon>
    )}
  </span>
);

const Info = () => (
  <Icon w={9} h={9}>
    <circle cx="4.500" cy="4.500" r="3.900" stroke="#8fa3c8" strokeWidth="0.900" />
    <path d="M4.500 4v3M4.500 2.200v1" stroke="#6f86b5" />
  </Icon>
);

const Section = ({ open, className, children }: BoxProps & { open?: boolean }) => (
  <div className={clsx('flex shrink-0 items-center text-[10.200px] font-bold', className)}>
    <Slot className="w-[15px] pr-[2px]">
      {open ? (
        <Icon w={6} h={6}><path d="M6 0v6H0z" fill="#2b579a" /></Icon>
      ) : (
        <Icon w={5} h={8}><path d="M0.500 0.800v6L4 3.800z" stroke="#999" strokeWidth="0.900" /></Icon>
      )}
    </Slot>
    {children}
  </div>
);

const FormatAxisPane = () => (
  <aside className="flex w-[236px] shrink-0 flex-col border-l border-[#d9d9d9] bg-linear-to-b from-white to-[#eeeeee] text-[#484848]">
    <div className="flex h-[37px] shrink-0 items-center pl-[8px] pt-[3px]">
      <h2 className="text-[17px] tracking-[-0.25px] text-[#44618f]">Format Axis</h2>
      <div className="mb-[9px] ml-auto flex items-center gap-[6px] pr-[9px]">
        <Icon w={8} h={4}><path d="M0.500 0h7L4 4z" fill="#666" /></Icon>
        <Icon w={8} h={8}><path d="M0.500 0.500l7 7M7.500 0.500l-7 7" stroke="#555" strokeWidth="1.300" /></Icon>
      </div>
    </div>
    <div className="flex h-[17px] shrink-0 items-center pl-[11.5px] text-[10.2px]">
      <span className="whitespace-nowrap font-bold tracking-[-0.3px] text-[#2b579a]">AXIS OPTIONS</span>
      <span className="ml-[5px]"><Icon w={8} h={5}><path d="M0 0h8L4 4.500z" fill="#666" /></Icon></span>
      <span className="ml-[8px] h-[14px] w-px bg-[#e2e2e2]" />
      <span className="ml-[4px] whitespace-nowrap tracking-[-0.4px]">TEXT OPTIONS</span>
    </div>
    <div className="flex h-[34px] shrink-0 items-center pl-[6px]">
      <Slot className="w-[31px]">
        <Icon w={16} h={15}>
          <path d="M7 2L1 8.500l5.500 5L12.500 7zM5 1.500C4 3 5.500 5 7 7" stroke="#666" />
          <path d="M11 4.500c3 0.500 4.500 3 3.500 7.500-0.500-3-1.500-4-3.500-4.500z" fill="#555" />
        </Icon>
      </Slot>
      <Slot className="w-[30px]">
        <Icon w={14} h={14}>
          <path d="M7 0.800l6 4.700-2 7H3l-2-7z" stroke="#777" />
          <path d="M3 12.500h8" stroke="#999" strokeWidth="2" />
        </Icon>
      </Slot>
      <Slot className="w-[32px]">
        <Icon w={14} h={15}>
          <path d="M0.500 4.500h2.500M1.700 4.500v9M0.500 13.500h2.500M4.500 0v3M13 0v3M4.500 1.500H13" stroke="#777" />
          <path d="M4 4.500h10v10H4z" fill="#555" />
          <path d="M9 5.500l1.500 1.800h-3zM9 13.500l1.500-1.800h-3zM5 9.500L6.800 8v3zM13 9.500L11.200 8v3z" fill="#fff" />
        </Icon>
      </Slot>
      <Slot className="w-[29px]">
        <Icon w={14} h={14}>
          <path d="M0 3.500h4V14H0zM5 0h4v14H5zM10 2h4v12h-4z" fill="#2b579a" />
        </Icon>
      </Slot>
    </div>
    <Icon w={235} h={9}>
      <path d="M9 6.500h100l5.500-6 5.500 6h105" stroke="#c8c8c8" fill="#fdfdfd" />
    </Icon>
    <div className="flex flex-1">
      <div className="flex w-[210px] shrink-0 flex-col overflow-hidden whitespace-nowrap pl-[11px] text-[10px] tracking-[-0.19px]">
        <div className="flex h-[5px] shrink-0 items-end overflow-hidden pl-[21px]">
          <span className="mb-[-1px] w-[71px] leading-[12px]">Minimum</span>
          <Field className="h-[18px] w-[63px] border-[#b8b8b8]" />
          <span className="mb-[-1px] ml-[12px] leading-[12px]">Auto</span>
        </div>
        <ValueRow label="Maximum" value="30.0" className="h-[31px]" />
        <div className="flex h-[11px] shrink-0 items-center pl-[15px]">Units</div>
        <ValueRow label="Major" value="5.0" className="h-[28px]" />
        <ValueRow label="Minor" value="1.0" className="h-[19px]" />
        <div className="flex h-[23px] shrink-0 items-center pl-[15px]">Horizontal axis crosses</div>
        <div className="flex h-[22px] shrink-0 items-center pl-[22px]"><Radio checked /><span>Aut<u>o</u>matic</span></div>
        <div className="flex h-[17px] shrink-0 items-center pl-[22px]">
          <Radio /><span>Axis valu<u>e</u></span>
          <Field className="ml-auto mr-px h-[17px] w-[47px] border-[#e0e0e0] text-[#888]">0.0</Field>
        </div>
        <div className="flex h-[23px] shrink-0 items-center pl-[22px]"><Radio /><span className="tracking-[-0.28px]"><u>M</u>aximum axis value</span></div>
        <div className="flex h-[19px] shrink-0 items-center pl-[15px]">
          <span>Display <u>u</u>nits</span>
          <Field className="ml-auto mr-px h-[18px] w-[70px] justify-between border-[#b8b8b8] pr-[4px] !tracking-[-0.1px] text-[#333]">
            None <Icon w={6} h={4}><path d="M0 0h6L3 3.500z" fill="#666" /></Icon>
          </Field>
        </div>
        <div className="flex h-[23px] shrink-0 items-center pl-[21px] text-[#b0b0b0]"><Check faded /><span className="tracking-[-0.24px]"><u>S</u>how display units label on chart</span></div>
        <div className="flex h-[18px] shrink-0 items-center pl-[15px]">
          <Check /><span><u>L</u>ogarithmic scale</span>
          <span className="ml-[15px] text-[#aaa]"><u>B</u>ase</span>
          <Field className="ml-auto mr-px h-[17px] w-[47px] border-[#e0e0e0] text-[#888]">10</Field>
        </div>
        <div className="flex h-[25px] shrink-0 items-center pl-[15px]"><Check /><span className="tracking-[-0.3px]"><u>V</u>alues in reverse order</span></div>
        <Section className="mt-[4px] h-[20px] tracking-[-0.1px] text-[#3c3c3c]">TICK MARKS</Section>
        <Section className="h-[20px] tracking-[-0.25px] text-[#3c3c3c]">LABELS</Section>
        <Section open className="-ml-px mr-px mt-[2px] h-[14px] border border-[#b3c5df] bg-[#d5e1f2] tracking-[-0.4px] text-[#2b579a]">NUMBER</Section>
        <div className="flex h-[21px] shrink-0 items-center pl-[15px]"><span><u>C</u>ategory</span></div>
        <div className="relative flex h-[18px] shrink-0 pl-[14px]">
          <Field className="h-[18px] w-[160px] border-[#b0bccb] !text-[10px] text-[#444]">General</Field>
          <div className="-ml-px flex h-[18px] w-[13px] items-center justify-center border border-[#a5b9d8] bg-[#d5e1f2]">
            <Icon w={6} h={4}><path d="M0 0h6L3 3.500z" fill="#333" /></Icon>
          </div>
          <div className="ml-[3px]"><Info /></div>
          <div className="absolute left-[141px] top-[-6px] h-[38px] w-[38px] rounded-full bg-[#ffff00] mix-blend-multiply" />
          <div className="absolute left-[160px] top-[13px]">
            <Icon w={9} h={13}>
              <path d="M0.500 0.500v10l2.300-2 1.700 3.800 1.700-0.700-1.600-3.700h3.200z" fill="#fff" stroke="#333" strokeWidth="0.900" />
            </Icon>
          </div>
        </div>
        <div className="mt-[15px] flex h-[20px] shrink-0 items-center gap-[4px] pl-[15px]"><span>Forma<u>t</u> Code</span><span className="mb-[3px]"><Info /></span></div>
        <div className="mt-[1px] flex h-[18px] shrink-0 items-center pl-[14px]">
          <Field className="h-[18px] w-[146px] border-[#b8b8b8] text-[#333]">General</Field>
          <button className="ml-auto mr-px h-[20px] w-[31px] border border-[#b8b8b8] bg-white text-[10.5px]"><u>A</u>dd</button>
        </div>
        <div className="mt-[4px] flex h-[18px] shrink-0 items-center pl-[15px]"><Check checked /><span>L<u>i</u>nked to source</span></div>
      </div>
      <div className="mb-[14px] ml-[1px] mt-[1px] flex w-[13px] flex-col bg-[#ececec]">
        <Slot className="h-[13px] border border-[#c9c9c9] bg-white"><Icon w={6} h={4}><path d="M0 3.500h6L3 0z" fill="#666" /></Icon></Slot>
        <div className="mt-[41px] flex-1 border border-[#c9c9c9] bg-white" />
        <Slot className="h-[13px] border border-[#c9c9c9] bg-white"><Icon w={6} h={4}><path d="M0 0h6L3 3.500z" fill="#666" /></Icon></Slot>
      </div>
    </div>
  </aside>
);

/* ---------- Status bar and taskbar ---------- */

const StatusBar = () => (
  <div className="flex h-[18px] shrink-0 items-center bg-[#2b579a] text-[8.800px] tracking-[-0.2px] text-white">
    <span className="w-[61px] pl-[4.5px] pt-px">PAGE 1 OF 2</span>
    <span className="w-[51px] pl-[4px] pt-px">6 WORDS</span>
    <span className="w-[104px] whitespace-nowrap pl-[4px] pt-px">ENGLISH (UNITED STATES)</span>
    <Slot className="w-[42px]">
      <Icon w={10} h={9}>
        <path d="M1 2.500h8.500V9H1z" fill="#dfe8f5" />
        <path d="M1 4.500h8.500M1 6.700h8.500M3.800 3v6M6.700 3v6" stroke="#2b579a" strokeWidth="0.700" />
        <circle cx="2" cy="1.500" r="1.500" fill="#fff" />
      </Icon>
    </Slot>
    <div className="ml-auto flex h-full items-center">
      <Slot className="w-[28px]">
        <Icon w={10} h={9}>
          <path d="M0 0.500h4.500V8H0zM5.500 0.500H10V8H5.500z" fill="#c3d3ea" />
          <path d="M1 2.500h3M1 4.500h3M6.500 2.500h3M6.500 4.500h3" stroke="#2b579a" strokeWidth="0.700" />
        </Icon>
      </Slot>
      <Slot className="h-full w-[27px] bg-[#1f4583]">
        <Icon w={10} h={9}>
          <path d="M0 0h10v9H0z" fill="#c3d3ea" />
          <path d="M1.500 2h7M1.500 4h7M1.500 6h7M1.500 8h7" stroke="#1f4583" strokeWidth="0.700" />
        </Icon>
      </Slot>
      <Slot className="w-[27px]">
        <Icon w={10} h={9}>
          <path d="M0.500 0.500h8v7h-8zM2 2.500h5M2 4.500h3" stroke="#c3d3ea" />
          <circle cx="7.500" cy="6" r="2.500" fill="#e3ebf7" />
        </Icon>
      </Slot>
      <Slot className="w-[13px]"><span className="h-[2px] w-[7px] bg-white" /></Slot>
      <Slot className="w-[84px]">
        <span className="h-px w-[42px] bg-[#b9c8e0]" />
        <span className="h-[9px] w-[3px] bg-white" />
        <span className="h-px w-[38px] bg-[#b9c8e0]" />
      </Slot>
      <Slot className="w-[11px]">
        <Icon w={7} h={7}><path d="M3.500 0v7M0 3.500h7" stroke="#fff" strokeWidth="1.700" /></Icon>
      </Slot>
      <span className="w-[40px] whitespace-nowrap pl-[9px] pt-px">110 %</span>
    </div>
  </div>
);

const Taskbar = () => (
  <footer className="flex h-[34px] shrink-0 items-stretch bg-linear-to-r from-[#cfe8ec] via-[#d6e7ef] to-[#d3dde8]">
    <Slot className="w-[40px]">
      <Icon w={14} h={14}><path d="M0 2l6-0.900v5.500H0zM6.700 1L14 0v6.600H6.700zM0 7.300h6v5.500L0 12zM6.700 7.300H14V14l-7.300-1z" fill="#111" /></Icon>
    </Slot>
    <Slot className="w-[40px]">
      <Icon w={14} h={14}><circle cx="8.500" cy="5.500" r="4.700" stroke="#222" strokeWidth="1.200" /><path d="M5 9L0.500 13.500" stroke="#222" strokeWidth="1.300" /></Icon>
    </Slot>
    <Slot className="w-[40px]">
      <Icon w={14} h={14}><path d="M0.500 0v2.500h8V0M0.500 4.500h8v5h-8zM0.500 14v-2.500h8V14M12 0v14" stroke="#222" /><path d="M11 3.500h2v2h-2z" fill="#222" /></Icon>
    </Slot>
    <Slot className="w-[44px]">
      <Icon w={18} h={18}>
        <path d="M9 2h8.500v14H9z" fill="#fff" stroke="#1e7145" />
        <path d="M11 5h5M11 8h5M11 11h5M13.500 3v12" stroke="#1e7145" />
        <path d="M0 2l11-2v18L0 16z" fill="#1e7145" />
        <path d="M3 5.500l5 7M8 5.500l-5 7" stroke="#fff" strokeWidth="1.500" />
      </Icon>
    </Slot>
    <Slot className="w-[38px]">
      <Icon w={19} h={16}>
        <path d="M0 0h8l1.500 2H18v5H0z" fill="#e0a52f" />
        <path d="M0 3.500h19V15H0z" fill="#fbd667" />
        <path d="M3.500 16V9.500h12V16h-3v-3.500h-6V16z" fill="#4f93c8" />
      </Icon>
    </Slot>
    <Slot className="relative w-[48px]">
      <Icon w={22} h={22}>
        <circle cx="10" cy="10" r="9.500" fill="#f2c230" />
        <path d="M10 10L1.800 5.300A9.500 9.500 0 0118.200 5.300z" fill="#e04335" />
        <path d="M18.200 5.300H10v5z" fill="#e04335" />
        <path d="M10 10L1.800 5.300A9.500 9.500 0 009 19.500l4-7z" fill="#2f9e4f" />
        <circle cx="10" cy="10" r="4.700" fill="#fff" />
        <circle cx="10" cy="10" r="3.600" fill="#3f7fe0" />
        <circle cx="15.500" cy="15.500" r="6" fill="#b98a72" />
        <path d="M11 19c1-4 8-4 9 0-2 3-7 3-9 0z" fill="#8c2f2a" />
        <circle cx="15.500" cy="14" r="2.500" fill="#4a3530" />
      </Icon>
      <span className="absolute bottom-0 left-[7px] h-[2px] w-[33px] bg-[#0a74c9]" />
    </Slot>
    <Slot className="w-[33px]">
      <Icon w={19} h={19}>
        <circle cx="9.500" cy="9.500" r="9.300" fill="#f7fcfd" />
        <path d="M18 5.500C13 4 12.500 8.500 9 10.500S3 12 1.500 14.500C3 17 5 18.300 7 18.600 7 14 10 13 12.500 11.500S18 9 18 5.500z" fill="#35bccb" />
      </Icon>
    </Slot>
    <Slot className="w-[50px]">
      <Icon w={20} h={20}>
        <path d="M0 0h20v20H0z" fill="#0879bd" />
        <path d="M7 9V6.500h9v5.500h-2.500M4 9h8v4.500H4zM9.500 8.500l1-1.500 2.500 3" stroke="#d8ecf7" strokeWidth="0.900" />
      </Icon>
    </Slot>
    <Slot className="w-[33px]">
      <Icon w={20} h={19}>
        <ellipse cx="9" cy="5.500" rx="8.500" ry="4.700" stroke="#d4606b" strokeWidth="1.300" transform="rotate(-12 9 5.500)" />
        <path d="M3 10l12 2M10 2l3 10" stroke="#c94f5c" />
        <circle cx="11.500" cy="15.500" r="2.300" stroke="#2f79ba" strokeWidth="1.500" />
        <circle cx="16.500" cy="13" r="2.300" stroke="#2f79ba" strokeWidth="1.500" />
      </Icon>
    </Slot>
    <Slot className="w-[50px]">
      <Icon w={19} h={19}>
        <circle cx="9" cy="10" r="8.800" fill="#67b832" />
        <path d="M9 10L10.500 0H18.500l0 7.500z" fill="#e6f1f2" />
        <circle cx="9" cy="10.500" r="4" fill="#fff" />
        <path d="M11.500 5.500l0.500-5M13.500 7l3-5M14.500 9l4-3" stroke="#e4694a" strokeWidth="1.500" />
      </Icon>
    </Slot>
    <Slot className="w-[32px]">
      <Icon w={20} h={20}>
        <path d="M0 0h20v20H0z" fill="#15508a" />
        <path d="M10 4v12M4.500 10h11M6 6l8 8M14 6l-8 8" stroke="#fff" strokeWidth="1.500" />
        <circle cx="10" cy="10" r="3" fill="#fff" />
      </Icon>
    </Slot>
    <Slot className="w-[50px]">
      <Icon w={18} h={20}>
        <path d="M9 0c2 4 8 7 8 12a8 7.500 0 01-16 0C1 7 7 4 9 0z" fill="#2f8fc4" />
        <path d="M9 1l2 6-5 10C2 15 1 11 3 8z" fill="#a3d3e8" />
        <path d="M9 3l5 13M9 3L5 14" stroke="#e6c84b" strokeWidth="1.800" />
        <path d="M4 14c4-3 8 0 12-1-1 5-9 7-12 1z" fill="#3f9c6a" />
      </Icon>
    </Slot>
    <Slot className="-ml-[4px] w-[41px] border-b-2 border-[#0a74c9] bg-[#edf6fa]"><WordLogo size={18} /></Slot>
    <div className="ml-auto flex items-center">
      <Slot className="w-[30px]">
        <Icon w={12} h={13}>
          <circle cx="8.500" cy="2.500" r="2" stroke="#222" /><circle cx="3.700" cy="6.500" r="2" stroke="#222" />
          <path d="M0.500 12.500c0-5 6.500-5 6.500 0M7 6c3-1.500 4.700 0 4.700 3.500" stroke="#222" />
        </Icon>
      </Slot>
      <Slot className="w-[30px]"><Icon w={11} h={6}><path d="M0.500 5.500l5-5 5 5" stroke="#222" strokeWidth="1.100" /></Icon></Slot>
      <Slot className="w-[9px]">
        <Icon w={9} h={13}><rect x="2" y="0" width="5" height="9" rx="1" fill="#111" /><path d="M0.500 6v3.500h8V6M4.500 9.500v3M2.500 12.500h4" stroke="#222" /></Icon>
      </Slot>
      <Slot className="w-[31px]">
        <Icon w={11} h={12}><path d="M0.500 0.500h2.700l2.300 7.500 2.300-7.500h2.700L6.800 11.500H4.200z" fill="#f2f6fa" stroke="#333" strokeWidth="0.800" /></Icon>
      </Slot>
      <Slot className="w-[17px]">
        <Icon w={14} h={13}>
          <path d="M3 12L12 2.500l1.500 1.500L5 12.500zM1 8c3-3 6 0 3 3s-5-1-1-4 5-6 6-6 0 3-2 5" stroke="#222" strokeWidth="1" />
        </Icon>
      </Slot>
      <div className="w-[71px] whitespace-nowrap text-center text-[10px] leading-[15px] tracking-[-0.22px] text-[#222]">
        <div>11:47 CH</div>
        <div>14/05/2024</div>
      </div>
      <Slot className="w-[21px]">
        <Icon w={14} h={14}><path d="M0.500 0.500h13v10.500H9.500L7 13.500 5 11H0.500z" stroke="#222" /></Icon>
      </Slot>
      <div className="w-[17px]" />
    </div>
  </footer>
);

export default function App() {
  return (
    <div className="flex h-[720px] w-[1280px] flex-col overflow-hidden bg-white font-['Open_Sans','Noto_Sans',sans-serif] [text-rendering:geometricPrecision]">
      <TitleBar />
      <Ribbon />
      <div className="flex h-[554px] shrink-0">
        <DocumentArea />
        <FormatAxisPane />
      </div>
      <StatusBar />
      <Taskbar />
    </div>
  );
}
